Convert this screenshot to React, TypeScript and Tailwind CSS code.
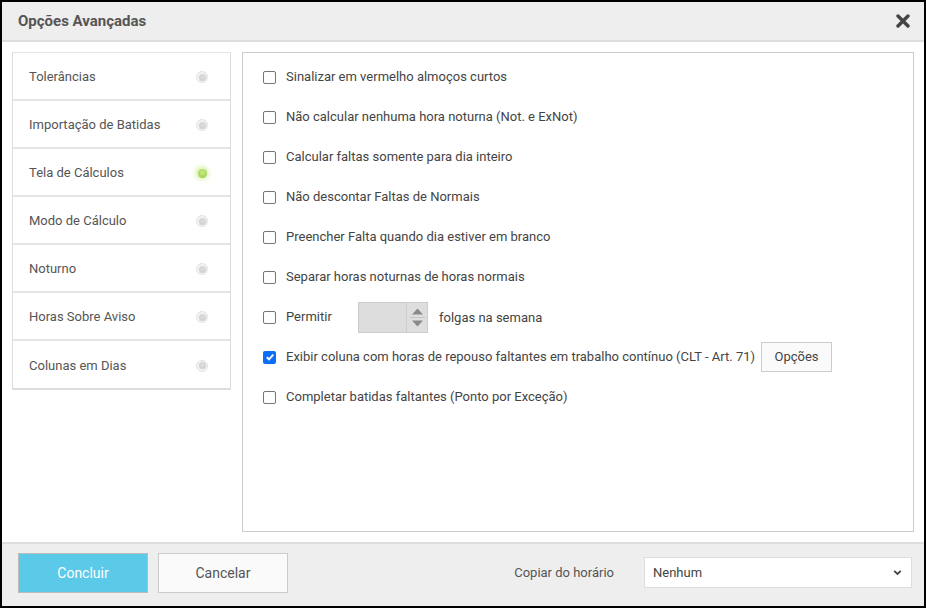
import { useState } from 'react';

const menu = [
  'Tolerâncias',
  'Importação de Batidas',
  'Tela de Cálculos',
  'Modo de Cálculo',
  'Noturno',
  'Horas Sobre Aviso',
  'Colunas em Dias',
];

const options = [
  { label: 'Sinalizar em vermelho almoços curtos', checked: false },
  { label: 'Não calcular nenhuma hora noturna (Not. e ExNot)', checked: false },
  { label: 'Calcular faltas somente para dia inteiro', checked: false },
  { label: 'Não descontar Faltas de Normais', checked: false },
  { label: 'Preencher Falta quando dia estiver em branco', checked: false },
  { label: 'Separar horas noturnas de horas normais', checked: false },
];

function Check({ checked }: { checked: boolean }) {
  if (checked) {
    return (
      <span className="w-[13px] h-[13px] rounded-[2px] bg-[#0b6ef6] flex items-center justify-center shrink-0">
        <svg width="10" height="10" viewBox="0 0 10 10">
          <path d="M1.8 5.2 L4 7.3 L8.3 2.6" fill="none" stroke="#fff" strokeWidth="1.9" />
        </svg>
      </span>
    );
  }
  return <span className="w-[13px] h-[13px] rounded-[2px] border border-[#767676] bg-white shrink-0" />;
}

function Dot({ active }: { active: boolean }) {
  return active ? (
    <span className="w-[12px] h-[12px] rounded-full bg-[#e4f5c6] flex items-center justify-center shadow-[0_0_4px_1px_#dff3b8]">
      <span className="w-[9px] h-[9px] rounded-full bg-[radial-gradient(circle_at_50%_40%,#c9ec8a,#95c83f)]" />
    </span>
  ) : (
    <span className="w-[12px] h-[12px] rounded-full bg-[#f3f3f3] border border-[#e2e2e2] flex items-center justify-center">
      <span className="w-[7px] h-[7px] rounded-full bg-[radial-gradient(circle_at_50%_40%,#e0e0e0,#c8c8c8)]" />
    </span>
  );
}

export default function App() {
  const [active] = useState(2);

  return (
    <div
      className="w-[926px] h-[608px] bg-black p-[2px] text-[13px]"
      style={{ fontFamily: 'Roboto, "Liberation Sans", sans-serif' }}
    >
      <div className="w-full h-full bg-white flex flex-col">
        {/* Header */}
        <div className="h-[40px] bg-[#eeeeee] border-b-2 border-[#dddddd] flex items-center justify-between pl-[16px] pr-[14px] shrink-0">
          <h1 className="text-[15px] font-bold text-[#555555]">Opções Avançadas</h1>
          <svg width="14" height="14" viewBox="0 0 14 14">
            <path d="M2 2 L12 12 M12 2 L2 12" stroke="#444" strokeWidth="3.4" strokeLinecap="round" />
          </svg>
        </div>

        {/* Body */}
        <div className="flex-1 flex gap-[11px] pl-[10px] pr-[10px] pt-[10px] pb-[10px] min-h-0">
          <div className="w-[219px] self-start border border-[#dddddd] border-t-[#e4e4e4]">
            {menu.map((m, i) => (
              <div
                key={m}
                className={`h-[48px] flex items-center justify-between pt-[2px] pl-[16px] pr-[22px] text-[#555555] ${i < menu.length - 1 ? 'border-b-2 border-[#e4e4e4]' : 'border-b border-[#dddddd]'}`}
              >
                <span>{m}</span>
                <Dot active={i === active} />
              </div>
            ))}
          </div>

          <div className="flex-1 border border-[#cccccc] pt-[4px] pl-[20px] text-[#444444]">
            {options.map(o => (
              <div key={o.label} className="h-[40px] flex items-center gap-[10px]">
                <Check checked={o.checked} />
                <span>{o.label}</span>
              </div>
            ))}
            <div className="h-[40px] flex items-center">
              <Check checked={false} />
              <span className="ml-[10px] w-[72px]">Permitir</span>
              <div className="w-[70px] h-[31px] bg-[#dddddd] border border-[#cccccc] flex justify-end">
                <div className="w-[21px] h-full border-l border-[#cccccc] flex flex-col items-center justify-center gap-[2px] bg-[#dedede]">
                  <svg width="13" height="7" viewBox="0 0 13 7"><path d="M1 6.5 L6.5 0.5 L12 6.5 Z" fill="#8a8a8a" /></svg>
                  <div className="w-[15px] h-px bg-[#c4c4c4]" />
                  <svg width="13" height="7" viewBox="0 0 13 7"><path d="M1 0.5 L6.5 6.5 L12 0.5 Z" fill="#8a8a8a" /></svg>
                </div>
              </div>
              <span className="ml-[11px] pt-px">folgas na semana</span>
            </div>
            <div className="h-[40px] flex items-center">
              <Check checked />
              <span className="ml-[10px]">Exibir coluna com horas de repouso faltantes em trabalho contínuo (CLT - Art. 71)</span>
              <button className="ml-[6px] w-[71px] h-[30px] border border-[#cccccc] bg-[#fafafa] text-[#444444]">Opções</button>
            </div>
            <div className="h-[40px] flex items-center gap-[10px]">
              <Check checked={false} />
              <span>Completar batidas faltantes (Ponto por Exceção)</span>
            </div>
          </div>
        </div>

        {/* Footer */}
        <div className="h-[64px] bg-[#eeeeee] border-t-2 border-[#dddddd] flex items-start pt-[9px] pl-[16px] pr-[12px] shrink-0">
          <button className="w-[130px] h-[40px] bg-[#5bc9e8] border border-[#bbbbbb] text-white text-[14px]">Concluir</button>
          <button className="ml-[10px] w-[130px] h-[40px] bg-[#fafafa] border border-[#cccccc] text-[#555555] text-[14px]">Cancelar</button>
          <span className="ml-auto mt-[4px] h-[31px] flex items-center text-[#555555]">Copiar do horário</span>
          <div className="ml-[30px] mt-[4px] w-[268px] h-[31px] bg-white border border-[#dddddd] flex items-center justify-between pl-[8px] pr-[9px] text-[#444444]">
            <span>Nenhum</span>
            <svg width="9" height="7" viewBox="0 0 9 7"><path d="M1.2 1.8 L4.5 5 L7.8 1.8" fill="none" stroke="#444" strokeWidth="1.8" /></svg>
          </div>
        </div>
      </div>
    </div>
  );
}
